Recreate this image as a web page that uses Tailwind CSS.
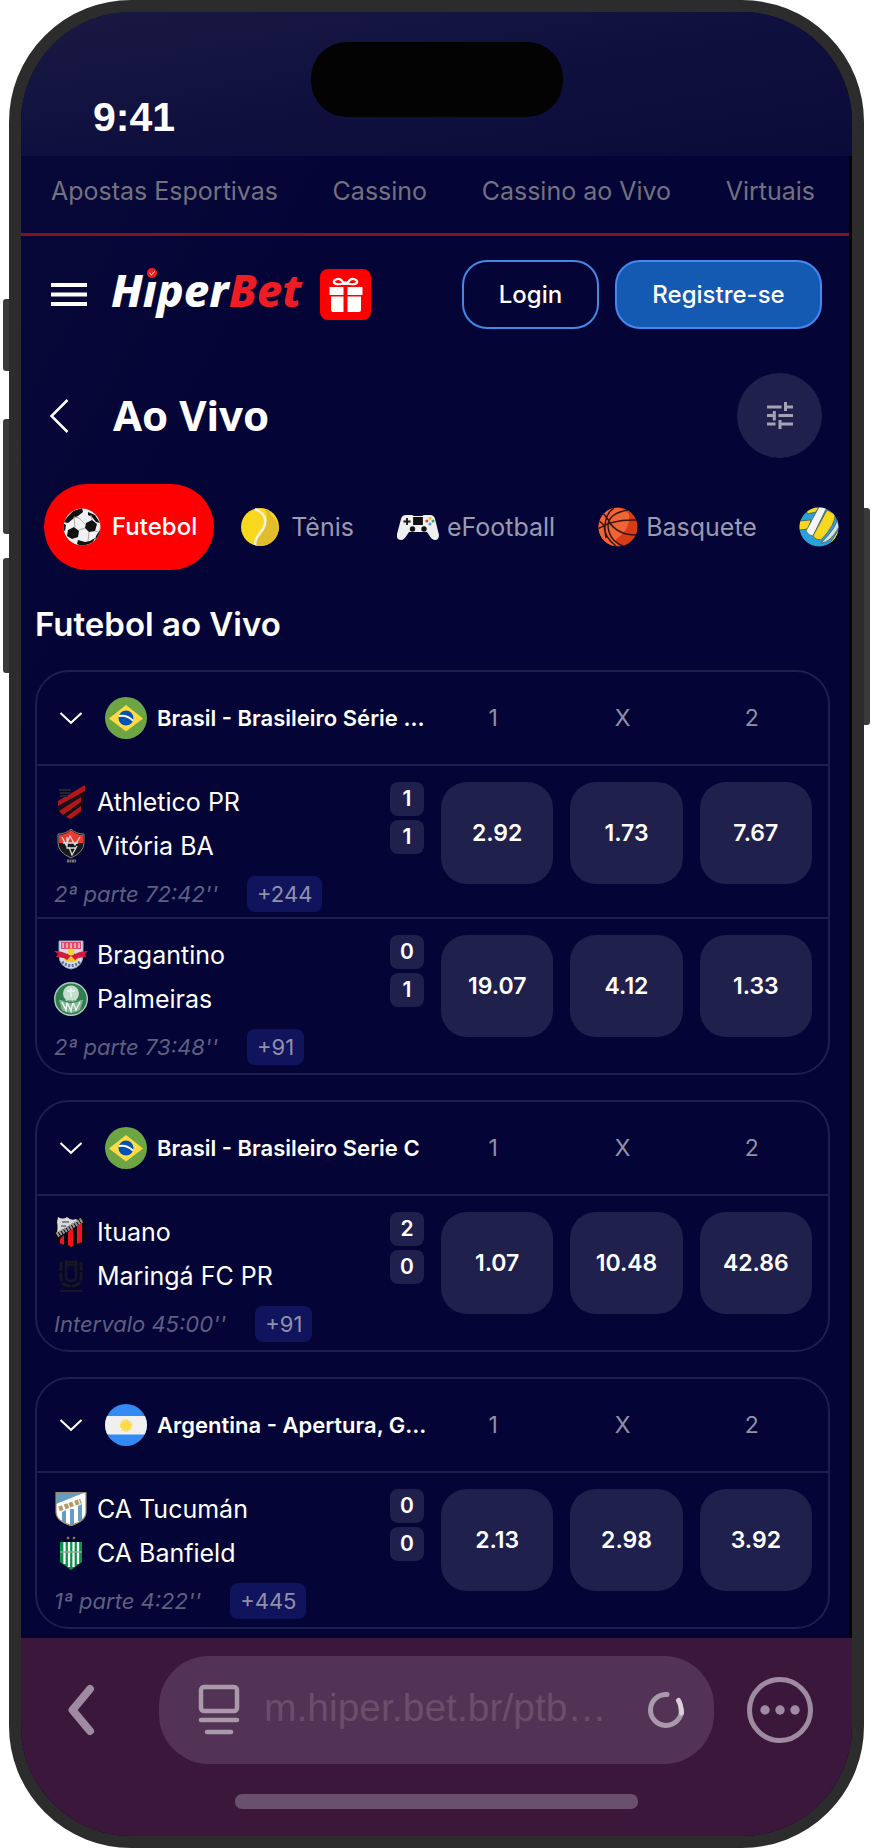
<!DOCTYPE html>
<html lang="pt-BR">
<head>
<meta charset="utf-8">
<meta name="viewport" content="width=device-width, initial-scale=1">
<title>HiperBet - Ao Vivo</title>
<script src="https://cdn.jsdelivr.net/npm/@tailwindcss/browser@4"></script>
</head>
<body class="bg-white font-['Inter','Noto_Sans',sans-serif]">

<svg class="hidden" aria-hidden="true">
  <symbol id="brazil" viewBox="0 0 42 42">
    <circle cx="21" cy="21" r="21" fill="#6da544"/>
    <path d="M21 8 38 21.500 21 34.500 4 21.500Z" fill="#ffda44"/>
    <circle cx="21" cy="21" r="7.500" fill="#0052b4"/>
    <path d="M13.800 19q8-1.500 14.200 4.600" fill="none" stroke="#fff" stroke-width="2"/>
  </symbol>
  <symbol id="chevron" viewBox="0 0 24 14">
    <path d="M1.500 2 12 11.800 22.500 2" fill="none" stroke="currentColor" stroke-width="2"/>
  </symbol>
</svg>

<div class="relative px-[9px]">
  <!-- side buttons of the device -->
  <span class="absolute left-[3px] top-[299px] h-[72px] w-3 rounded-[3px] bg-[#3a3a3c]"></span>
  <span class="absolute left-[3px] top-[419px] h-[115px] w-3 rounded-[3px] bg-[#3a3a3c]"></span>
  <span class="absolute left-[3px] top-[558px] h-[115px] w-3 rounded-[3px] bg-[#3a3a3c]"></span>
  <span class="absolute right-[3px] top-[508px] h-[217px] w-3 rounded-[3px] bg-[#3a3a3c]"></span>

  <div class="relative flex flex-col overflow-hidden rounded-[122px] border-12 border-[#2c2c2d] bg-[#040436]">

    <div class="relative flex h-36 items-end bg-linear-to-br from-[#191942] via-[#10103f] to-[#0b0b3a] pb-[15px] pl-18">
      <span class="text-[41px] leading-[48px] font-bold text-white font-['Liberation_Sans',sans-serif]">9:41</span>
      <span class="absolute left-1/2 top-[30px] h-[75px] w-[252px] -translate-x-1/2 rounded-[36px] bg-[#030303]"></span>
    </div>

    <div class="border-r-3 border-black bg-linear-to-br from-[#080838] via-[#040436] via-20% to-[#040436]">
      <nav class="flex h-20 items-center justify-between border-b-3 border-[#86101e] pb-2 pl-[30px] pr-[34px] text-[25px] leading-8 text-[#72727f]">
        <a href="#">Apostas Esportivas</a>
        <a href="#">Cassino</a>
        <a href="#">Cassino ao Vivo</a>
        <a href="#">Virtuais</a>
      </nav>

      <header class="flex items-center pt-6 pl-[30px] pr-[27px]">
        <button aria-label="Menu" class="h-9 w-9 text-white">
          <svg viewBox="0 0 36 36" class="size-9" fill="currentColor"><path d="M0 6h36v4H0zM0 15.500h36v4H0zM0 25h36v4H0z"/></svg>
        </button>
        <a href="#" class="relative ml-6 pb-[10px] text-[45px] leading-[54px] font-extrabold italic text-white font-['Noto_Sans',sans-serif]">Hıper<span class="text-[#ee1c25]">Bet</span>
          <svg class="absolute left-[36px] top-[5px] size-[10px]" viewBox="0 0 10 10"><circle cx="5" cy="5" r="5" fill="#ee1c25"/><path d="m2.500 5 2 1.700L8 3.300" fill="none" stroke="#fff" stroke-width="1"/></svg>
        </a>
        <button aria-label="Presentes" class="ml-[18px] size-[51px] rounded-lg bg-[#ff0000]">
          <svg viewBox="0 0 51 51" class="size-[51px]">
            <g fill="#fff"><path d="M9.500 18h14v8h-14zM27.500 18h15v8h-15zM11 27.500h12.500V43H13q-2 0-2-2zM27.500 27.500H41V41q0 2-2 2H27.500zM23.500 12.500h4V16h-4z"/></g>
            <g fill="none" stroke="#fff" stroke-width="2.200"><path d="M25 14.500C20 15.500 15 16 14 13.500S18 9 20.500 10.500 22 14 25 14.500Z"/><path d="M26 14.500c5 1 10 1.500 11-1s-4-4.500-6.500-3S29 14 26 14.500Z"/></g>
          </svg>
        </button>
        <div class="ml-auto flex gap-4 text-[24px] leading-8 font-medium text-white">
          <button class="h-[69px] w-[137px] rounded-[25px] border-2 border-[#4488e6]">Login</button>
          <button class="h-[69px] w-[207px] rounded-[25px] border-2 border-[#4488f0] bg-[#155ab2]">Registre-se</button>
        </div>
      </header>

      <div class="flex items-center pt-11 pl-[28px] pr-[27px]">
        <button aria-label="Voltar" class="h-9 w-5 text-white"><svg viewBox="0 0 20 36" class="h-9 w-5" fill="none" stroke="currentColor" stroke-width="2.500"><path d="M18.500 2 2.500 18l16 16"/></svg></button>
        <h1 class="ml-11 pb-[2px] text-[42px] leading-[52px] font-bold text-white font-['Noto_Sans',sans-serif]">Ao Vivo</h1>
        <button aria-label="Filtros" class="ml-auto flex size-[85px] items-center justify-center rounded-full bg-[#20204d] text-[#a3a2b7]">
          <svg viewBox="0 0 26 27" class="h-[27px] w-[26px]" fill="none" stroke="currentColor" stroke-width="3"><path d="M0 5h14.500M18.500 0v9M18.500 5H26M0 13.500h7M7.300 9v9.500M11.500 13.500H26M0 22h8.500M13 18v9M13 22h13"/></svg>
        </button>
      </div>

      <div class="flex items-center overflow-hidden pt-[26px] pl-[23px] text-[25px] leading-8 text-[#9a9ab0]">
        <button class="flex h-[86px] shrink-0 items-center rounded-[43px] bg-[#ff0000] pr-[17px] pl-[19px] text-[24px] font-medium text-white">
          <svg viewBox="0 0 38 38" class="size-[38px]"><defs><clipPath id="fb"><circle cx="19" cy="19" r="18.500"/></clipPath></defs><g clip-path="url(#fb)"><circle cx="19" cy="19" r="19" fill="#f1f1f3"/><path d="M36 10q4 22-18 27l20 1Z" fill="#cfcfd2"/><path d="m10 3 9-3 1 4-5 4-4 2-6 5-5-1ZM23 15l6-3 5 4-2 7-6 1-4-4ZM5 22l6-3 5 4-1 6-6 2-5-3ZM25 4l7 3 5 8-4-1-4-5-4-2ZM15 32l7 2 5-1 5-3-3 6-9 3-6-3ZM0 15l3 2-1 6-2-1ZM37 22v7l-5 4 1-5Z" fill="#111"/><path d="m11 9 5 1 6 6M16 22l6-2M26 24l-1 9M11 9l1 10M29 12l-1-5M32 23l3 1" fill="none" stroke="#aaa" stroke-width="1"/></g></svg>
          <span class="ml-[11px]">Futebol</span>
        </button>
        <button class="ml-[27px] flex shrink-0 items-center">
          <svg viewBox="0 0 38 38" class="size-[38px]"><circle cx="19" cy="19" r="19" fill="#f8d71f"/><path d="M24 1C32 20 14 22 14 37.500A19 19 0 0 0 38 19C36 10 29 9 28 2Z" fill="#e1bd2c"/><path d="M14 1Q27 6 23.500 18C20 27 14 27 14 37" fill="none" stroke="#f4f0e2" stroke-width="2.500"/></svg>
          <span class="ml-3">Tênis</span>
        </button>
        <button class="ml-[43px] flex shrink-0 items-center">
          <svg viewBox="0 0 42 26" class="h-[26px] w-[42px]"><path d="M9 1h6l2 1h8l2-1h6q4 0 5 4l4 16q0 5-4 5-3 0-6-5l-2-3H12l-2 3q-3 5-6 5-5 0-4-6L4 5q1-4 5-4Z" fill="#efefef"/><path d="M17 4h8v6h-8zM10 4v7M6.500 7.500h7" fill="#111" stroke="#111" stroke-width="1.800"/><circle cx="15.500" cy="15" r="2.700" fill="#111"/><circle cx="27" cy="15" r="2.700" fill="#111"/><circle cx="33" cy="4.200" r="1.500" fill="#f5b81e"/><circle cx="29.800" cy="7" r="1.500" fill="#e33"/><circle cx="36" cy="7" r="1.500" fill="#2fac53"/><circle cx="33" cy="10" r="1.500" fill="#39a5e8"/></svg>
          <span class="ml-2">eFootball</span>
        </button>
        <button class="ml-[43px] flex shrink-0 items-center">
          <svg viewBox="0 0 40 40" class="size-10"><defs><clipPath id="bb"><circle cx="20" cy="20" r="19.500"/></clipPath></defs><g clip-path="url(#bb)"><circle cx="20" cy="20" r="20" fill="#d83c17"/><path d="M12 2a19.500 19.500 0 1 0 8 36C10 30 33 31 31 7Q22-2 12 2Z" fill="#f06535"/><path d="M0 22Q14 12 39 13M11 15Q20 28 38 28M16 1q-12 8-8 30M30 3Q12 6 10 17q0 16 15 22M0 13l6 5q0 12 12 21M5 6l7 9" fill="none" stroke="#36150d" stroke-width="1.500"/></g></svg>
          <span class="ml-2">Basquete</span>
        </button>
        <button aria-label="Vôlei" class="ml-[42px] shrink-0">
          <svg viewBox="0 0 40 40" class="size-10"><defs><clipPath id="vb"><circle cx="20" cy="20" r="19.500"/></clipPath></defs><g clip-path="url(#vb)" stroke="#38505a" stroke-width=".7"><path d="M0 0h40v40H0z" fill="#2ba1dc"/><path d="M8 0h12l-3 5-9 2ZM0 14l12-1-3 9-9 1Z" fill="#f8d71f"/><path d="M20 0h8L14 29q-4 0-7-5Z" fill="#f4f4f4"/><path d="m28 3 8 4q1 10-14 26-6 0-8-4Z" fill="#f8d71f"/><path d="M38 11q1 8-16 25 9 0 18-16Z" fill="#ddd"/><path d="m40 22-9 14h9Z" fill="#f8d71f"/></g></svg>
        </button>
      </div>

      <main class="pt-[34px] pr-[19px] pb-[9px] pl-[14px]">
        <h2 class="text-[33px] leading-10 font-semibold text-white">Futebol ao Vivo</h2>

        <div class="mt-[26px] flex flex-col gap-[25px]">
          <section class="rounded-[34px] border-2 border-[#1f1f4c] pb-[3px]">
            <div class="flex h-[92px] items-center pr-5 pl-[22px]">
              <button aria-label="Recolher" class="text-white"><svg class="h-[14px] w-6"><use href="#chevron"/></svg></button>
              <svg class="ml-[22px] size-[42px] shrink-0"><use href="#brazil"/></svg>
              <h3 class="ml-[10px] w-0 grow text-[22px] leading-8 font-semibold whitespace-nowrap text-white">Brasil - Brasileiro Série …</h3>
              <div class="grid w-[371px] shrink-0 grid-cols-3 gap-[17px] text-center text-[23px] leading-8 text-[#9090a6]"><span>1</span><span>X</span><span>2</span></div>
            </div>
            <article class="flex border-t-2 border-[#1f1f4c] pt-[14px] pr-4 pb-[5px] pl-[17px]">
              <div class="grow">
                <div class="flex">
                  <div class="grow text-[25px] leading-[44px] text-white">
                    <div class="flex items-center gap-[9px]">
                      <svg viewBox="0 0 34 34" class="size-[34px]"><path d="M4 17 31 0v11L27 29 15 34 4 26Z" fill="#151015"/><path d="M4 21V16L31 0v6ZM9 30l-4-4L27 12v5ZM17 34l-5-2 15-11v5Z" fill="#b4141c"/><path d="M5 5h12M6 8h10M6 11h8" stroke="#24242e" stroke-width="2"/></svg>
                      <span>Athletico PR</span>
                    </div>
                    <div class="flex items-center gap-[9px]">
                      <svg viewBox="0 0 34 34" class="size-[34px]"><path d="M4 5q8 0 13-5 5 5 13 5v9q0 9-13 15Q4 23 4 14Z" fill="#16181c" stroke="#8a8077" stroke-width="1"/><path d="M5 6q7 0 12-5 5 5 12 5v8H5Z" fill="#ec3a2e"/><path d="m8 8 4 8 4-9 5 9 5-8M13 8v11h9M9 14h15M15 18l3 8 5-9" fill="none" stroke="#ddd" stroke-width="1.300"/><path d="M13 32h9" stroke="#77776f" stroke-width="3" stroke-dasharray="2 .5"/></svg>
                      <span>Vitória BA</span>
                    </div>
                  </div>
                  <div class="mt-[2px] mr-[17px] flex flex-col gap-1 text-center text-[21px] leading-[34px] font-semibold text-white">
                    <span class="w-[34px] rounded-lg bg-[#20204d]">1</span><span class="w-[34px] rounded-lg bg-[#20204d]">1</span>
                  </div>
                </div>
                <div class="mt-2 flex items-center gap-[29px] text-[22px] leading-9">
                  <span class="text-[#5f5f80] italic">2ª parte 72:42''</span>
                  <a href="#" class="rounded-lg bg-[#10145c] px-[10px] text-[#9090a8]">+244</a>
                </div>
              </div>
              <div class="mt-[2px] grid h-[102px] w-[371px] shrink-0 grid-cols-3 gap-[17px] text-[23px] font-semibold text-white">
                <button class="rounded-[26px] bg-[#20204d]">2.92</button><button class="rounded-[26px] bg-[#20204d]">1.73</button><button class="rounded-[26px] bg-[#20204d]">7.67</button>
              </div>
            </article>
            <article class="flex border-t-2 border-[#1f1f4c] pt-[14px] pr-4 pb-[5px] pl-[17px]">
              <div class="grow">
                <div class="flex">
                  <div class="grow text-[25px] leading-[44px] text-white">
                    <div class="flex items-center gap-[9px]">
                      <svg viewBox="0 0 34 34" class="size-[34px]"><path d="M5 3h24v14q0 12-12 14Q5 29 5 17Z" fill="#d3dbe6" stroke="#8fa0b8"/><path d="M7 4h20v7H7Z" fill="#e24a6b"/><path d="M9 5v5m4-5v5m4-5v5m4-5v5m4-5v5" stroke="#fff" stroke-width="1"/><path d="M9 20h16l-4 4h-8Z" fill="#fbc51b"/><path d="M0 13q8 0 13 3l4-4 4 4q5-3 13-3l-3 3 1 3-8 1-3 2-4-4-4 4-3-2-8-1 2-3Z" fill="#d51a42"/><circle cx="17" cy="14" r="3.500" fill="#f3d33d"/><path d="M8 24q9 7 18 0" fill="none" stroke="#5b7192" stroke-width="3" stroke-dasharray="2 1.500"/></svg>
                      <span>Bragantino</span>
                    </div>
                    <div class="flex items-center gap-[9px]">
                      <svg viewBox="0 0 34 34" class="size-[34px]"><circle cx="17" cy="17" r="16.300" fill="#2d7f4e" stroke="#b5c9bd" stroke-width="1.400"/><circle cx="17" cy="11.500" r="8" fill="#c5ddce"/><path d="M5 18l24 0-3 10q-9 6-18 0Z" fill="#86b698"/><path d="M8 20l4 8 1-8 4 9 2-9 3 8 4-8M17 6v9M13 9h8" fill="none" stroke="#eef5f0" stroke-width="1.400"/><path d="M7 17q10 7 20 0" fill="none" stroke="#2d7f4e" stroke-width="1.500"/></svg>
                      <span>Palmeiras</span>
                    </div>
                  </div>
                  <div class="mt-[2px] mr-[17px] flex flex-col gap-1 text-center text-[21px] leading-[34px] font-semibold text-white">
                    <span class="w-[34px] rounded-lg bg-[#20204d]">0</span><span class="w-[34px] rounded-lg bg-[#20204d]">1</span>
                  </div>
                </div>
                <div class="mt-2 flex items-center gap-[29px] text-[22px] leading-9">
                  <span class="text-[#5f5f80] italic">2ª parte 73:48''</span>
                  <a href="#" class="rounded-lg bg-[#10145c] px-[10px] text-[#9090a8]">+91</a>
                </div>
              </div>
              <div class="mt-[2px] grid h-[102px] w-[371px] shrink-0 grid-cols-3 gap-[17px] text-[23px] font-semibold text-white">
                <button class="rounded-[26px] bg-[#20204d]">19.07</button><button class="rounded-[26px] bg-[#20204d]">4.12</button><button class="rounded-[26px] bg-[#20204d]">1.33</button>
              </div>
            </article>
          </section>

          <section class="rounded-[34px] border-2 border-[#1f1f4c] pb-[3px]">
            <div class="flex h-[92px] items-center pr-5 pl-[22px]">
              <button aria-label="Recolher" class="text-white"><svg class="h-[14px] w-6"><use href="#chevron"/></svg></button>
              <svg class="ml-[22px] size-[42px] shrink-0"><use href="#brazil"/></svg>
              <h3 class="ml-[10px] w-0 grow text-[22px] leading-8 font-semibold whitespace-nowrap text-white">Brasil - Brasileiro Serie C</h3>
              <div class="grid w-[371px] shrink-0 grid-cols-3 gap-[17px] text-center text-[23px] leading-8 text-[#9090a6]"><span>1</span><span>X</span><span>2</span></div>
            </div>
            <article class="flex border-t-2 border-[#1f1f4c] pt-[14px] pr-4 pb-[5px] pl-[17px]">
              <div class="grow">
                <div class="flex">
                  <div class="grow text-[25px] leading-[44px] text-white">
                    <div class="flex items-center gap-[9px]">
                      <svg viewBox="0 0 34 34" class="size-[34px]"><path d="M4 2q5 3 9 0 4 4 9 2 4-4 7-2l2 5q-2 4 3 11-1 9-8 11l-9 4-10-4Q1 27 0 19q4-6 2-12Z" fill="#0a0a10"/><path d="M4 2q5 3 9 0 4 4 9 2L24 6 3 18q1-7 0-11Z" fill="#dadade"/><path d="M6 24l4-4v10l-4-2ZM14 17l5-4v18l-2 1-3-2ZM23 11l5-4v20l-5 2Z" fill="#f3121e"/><path d="M3 20 28 5" stroke="#999" stroke-width="5" stroke-dasharray="2 1"/><path d="M8 7h7M7 11h5" stroke="#888" stroke-width="2"/></svg>
                      <span>Ituano</span>
                    </div>
                    <div class="flex items-center gap-[9px]">
                      <svg viewBox="0 0 34 34" class="size-[34px]" fill="none" stroke="#171722"><path d="M7 3v15q0 9 10 9t10-9V3" stroke-width="3" stroke-dasharray="9 1.500"/><path d="M12 1v17q0 4 5 4t5-4V1M12 3h10M12 6h10" stroke-width="2.500"/><path d="M6 32h22" stroke-width="2"/></svg>
                      <span>Maringá FC PR</span>
                    </div>
                  </div>
                  <div class="mt-[2px] mr-[17px] flex flex-col gap-1 text-center text-[21px] leading-[34px] font-semibold text-white">
                    <span class="w-[34px] rounded-lg bg-[#20204d]">2</span><span class="w-[34px] rounded-lg bg-[#20204d]">0</span>
                  </div>
                </div>
                <div class="mt-2 flex items-center gap-[29px] text-[22px] leading-9">
                  <span class="text-[#5f5f80] italic">Intervalo 45:00''</span>
                  <a href="#" class="rounded-lg bg-[#10145c] px-[10px] text-[#9090a8]">+91</a>
                </div>
              </div>
              <div class="mt-[2px] grid h-[102px] w-[371px] shrink-0 grid-cols-3 gap-[17px] text-[23px] font-semibold text-white">
                <button class="rounded-[26px] bg-[#20204d]">1.07</button><button class="rounded-[26px] bg-[#20204d]">10.48</button><button class="rounded-[26px] bg-[#20204d]">42.86</button>
              </div>
            </article>
          </section>

          <section class="rounded-[34px] border-2 border-[#1f1f4c] pb-[3px]">
            <div class="flex h-[92px] items-center pr-5 pl-[22px]">
              <button aria-label="Recolher" class="text-white"><svg class="h-[14px] w-6"><use href="#chevron"/></svg></button>
              <svg viewBox="0 0 42 42" class="ml-[22px] size-[42px] shrink-0"><defs><clipPath id="ar"><circle cx="21" cy="21" r="21"/></clipPath></defs><g clip-path="url(#ar)"><path d="M0 0h42v42H0z" fill="#338af3"/><path d="M0 12h42v18.500H0z" fill="#f0f0f0"/></g><circle cx="21" cy="21.500" r="4.800" fill="#ffda44"/><circle cx="21" cy="21.500" r="5" fill="none" stroke="#ffda44" stroke-width="2.500" stroke-dasharray="1.600 1"/></svg>
              <h3 class="ml-[10px] w-0 grow text-[22px] leading-8 font-semibold whitespace-nowrap text-white">Argentina - Apertura, G…</h3>
              <div class="grid w-[371px] shrink-0 grid-cols-3 gap-[17px] text-center text-[23px] leading-8 text-[#9090a6]"><span>1</span><span>X</span><span>2</span></div>
            </div>
            <article class="flex border-t-2 border-[#1f1f4c] pt-[14px] pr-4 pb-[5px] pl-[17px]">
              <div class="grow">
                <div class="flex">
                  <div class="grow text-[25px] leading-[44px] text-white">
                    <div class="flex items-center gap-[9px]">
                      <svg viewBox="0 0 34 34" class="size-[34px]"><defs><clipPath id="ct"><path d="M2 0h30v20q0 9-15 14Q2 29 2 20Z"/></clipPath></defs><g clip-path="url(#ct)"><path d="M0 0h34v34H0z" fill="#fff"/><path d="M2 0h30L2 12ZM8 20l4-2v14l-4-2ZM16 17h4v17h-4ZM24 14l4-2v17h-4Z" fill="#669dc2"/><path d="M5 17 27 9" stroke="#b69a69" stroke-width="5" stroke-dasharray="4 2 4 1"/></g><path d="M2 .7h30V20q0 9-15 13.300Q2 29 2 20Z" fill="none" stroke="#9a8c73" stroke-width="1.200"/></svg>
                      <span>CA Tucumán</span>
                    </div>
                    <div class="flex items-center gap-[9px]">
                      <svg viewBox="0 0 34 34" class="size-[34px]"><path d="M6 6h22v20l-11 8-11-8Z" fill="#0b9449"/><path d="M10.500 6v22M15 6v25M19.500 6v25M24 6v22" stroke="#fff" stroke-width="2.200"/><path d="M6 16h22" stroke="#90ac99" stroke-width="1.300"/><circle cx="14" cy="2" r="1.300" fill="#9a7e34"/><circle cx="20" cy="2" r="1.300" fill="#9a7e34"/></svg>
                      <span>CA Banfield</span>
                    </div>
                  </div>
                  <div class="mt-[2px] mr-[17px] flex flex-col gap-1 text-center text-[21px] leading-[34px] font-semibold text-white">
                    <span class="w-[34px] rounded-lg bg-[#20204d]">0</span><span class="w-[34px] rounded-lg bg-[#20204d]">0</span>
                  </div>
                </div>
                <div class="mt-2 flex items-center gap-[29px] text-[22px] leading-9">
                  <span class="text-[#5f5f80] italic">1ª parte 4:22''</span>
                  <a href="#" class="rounded-lg bg-[#10145c] px-[10px] text-[#9090a8]">+445</a>
                </div>
              </div>
              <div class="mt-[2px] grid h-[102px] w-[371px] shrink-0 grid-cols-3 gap-[17px] text-[23px] font-semibold text-white">
                <button class="rounded-[26px] bg-[#20204d]">2.13</button><button class="rounded-[26px] bg-[#20204d]">2.98</button><button class="rounded-[26px] bg-[#20204d]">3.92</button>
              </div>
            </article>
          </section>
        </div>
      </main>
    </div>

    <footer class="bg-[#3b173c] pt-[18px] pb-[27px]">
      <div class="flex items-center pr-[39px] pl-[46px]">
        <button aria-label="Página anterior" class="text-[#9f8ba1]"><svg viewBox="0 0 28 52" class="h-[52px] w-7" fill="none" stroke="currentColor" stroke-width="8" stroke-linecap="round" stroke-linejoin="round"><path d="M23 5 5.500 26 23 47"/></svg></button>
        <div class="mr-[33px] ml-16 flex h-[108px] grow items-center rounded-[50px] bg-[#533355] pr-[29px] pl-[39px]">
          <svg viewBox="0 0 42 52" class="h-[52px] w-[42px] shrink-0" fill="none" stroke="#a999ab" stroke-linecap="round"><rect x="3" y="3" width="36" height="24" rx="3" stroke-width="4.500"/><path d="M3 36h36M9 48h24" stroke-width="4.500"/></svg>
          <input type="text" aria-label="Endereço" value="m.hiper.bet.br/ptb…" readonly class="ml-6 w-0 grow bg-transparent pb-1 text-[39px] leading-[48px] text-[#6a4e6b] outline-none font-['Liberation_Sans',sans-serif]">
          <button aria-label="Carregando" class="shrink-0"><svg viewBox="0 0 38 38" class="size-[38px]" fill="none" stroke-linecap="round" stroke-width="5"><path d="M20 3.500A15.500 15.500 0 1 0 34.500 19" stroke="#a999ab"/><path d="M31.500 9.500Q34 13 34.500 22" stroke="#d9d1da"/></svg></button>
        </div>
        <button aria-label="Mais opções" class="text-[#9f8ba1]"><svg viewBox="0 0 66 66" class="size-[66px]" fill="currentColor"><circle cx="33" cy="33" r="30.500" fill="none" stroke="currentColor" stroke-width="5"/><circle cx="18" cy="33" r="4.700"/><circle cx="33" cy="33" r="4.700"/><circle cx="48" cy="33" r="4.700"/></svg></button>
      </div>
      <div class="mx-auto mt-[30px] h-[15px] w-[403px] rounded-[7px] bg-[#6b506d]"></div>
    </footer>
  </div>
</div>
</body>
</html>
